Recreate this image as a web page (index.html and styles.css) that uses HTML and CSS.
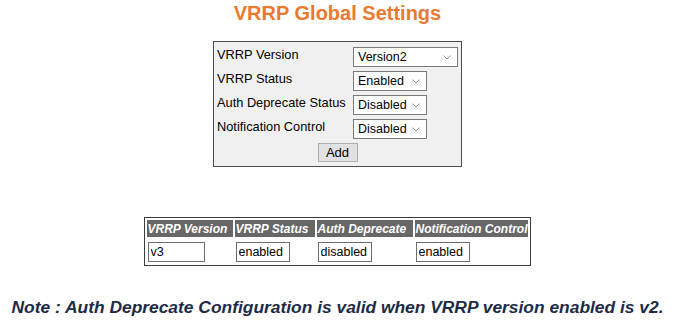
FILE: index.html
```html
<!DOCTYPE html>
<html>
<head>
    <title>VRRP Global Settings</title>
    <link rel="stylesheet" href="styles.css">
</head>
<body>
    <h1 class="page-title">VRRP Global Settings</h1>

    <form class="settings-box">
        <div class="settings-row">
            <label for="version">VRRP Version</label>
            <select id="version" class="wide">
                <option>Version2</option>
                <option>Version3</option>
            </select>
        </div>
        <div class="settings-row">
            <label for="status">VRRP Status</label>
            <select id="status">
                <option>Enabled</option>
                <option>Disabled</option>
            </select>
        </div>
        <div class="settings-row">
            <label for="auth">Auth Deprecate Status</label>
            <select id="auth">
                <option>Disabled</option>
                <option>Enabled</option>
            </select>
        </div>
        <div class="settings-row">
            <label for="notify">Notification Control</label>
            <select id="notify">
                <option>Disabled</option>
                <option>Enabled</option>
            </select>
        </div>
        <div class="button-row">
            <button type="button">Add</button>
        </div>
    </form>

    <table class="status-table">
        <tr>
            <th class="col-version">VRRP Version</th>
            <th class="col-status">VRRP Status</th>
            <th class="col-auth">Auth Deprecate</th>
            <th class="col-notify">Notification Control</th>
        </tr>
        <tr>
            <td><input type="text" class="first" value="v3" readonly></td>
            <td><input type="text" value="enabled" readonly></td>
            <td><input type="text" value="disabled" readonly></td>
            <td><input type="text" value="enabled" readonly></td>
        </tr>
    </table>

    <p class="note">Note : Auth Deprecate Configuration is valid when VRRP version enabled is v2.</p>
</body>
</html>
```

FILE: styles.css
```css
body {
    margin: 0;
    font-family: 'Liberation Sans', Arial, sans-serif;
    background: white;
    color: black;
}

.page-title {
    margin: 2px 0 0;
    font-size: 20px;
    line-height: 23px;
    font-weight: bold;
    text-align: center;
    color: #e8792f;
}

.settings-box {
    width: 241px;
    margin: 16px auto 0;
    padding: 3px 3px 4px;
    border: 1px solid #4a4a4a;
    background: #f0f0f0;
}

.settings-row {
    display: flex;
    align-items: flex-start;
    height: 24px;
}

.settings-row label {
    width: 136px;
    padding-top: 2px;
    font-size: 12.8px;
    line-height: 15px;
    white-space: nowrap;
}

select {
    -webkit-appearance: none;
    appearance: none;
    width: 74px;
    height: 20px;
    margin-top: 2px;
    padding: 0 0 0 4px;
    border: 1px solid #7a7a7a;
    border-radius: 0;
    background: white url("data:image/svg+xml;utf8,<svg xmlns='http://www.w3.org/2000/svg' width='8' height='5'><path d='M0.5 0.5 L4 4 L7.5 0.5' fill='none' stroke='%23909090' stroke-width='1'/></svg>") no-repeat right 6px center;
    font-family: 'Liberation Sans', Arial, sans-serif;
    font-size: 12.5px;
    color: black;
}

select.wide {
    width: 105px;
}

.button-row {
    display: flex;
    justify-content: center;
    margin-top: 2px;
}

button {
    width: 40px;
    height: 19px;
    padding: 0;
    border: 1px solid #adadad;
    background: #e1e1e1;
    font-family: 'Liberation Sans', Arial, sans-serif;
    font-size: 13px;
    color: black;
}

.status-table {
    margin: 50px auto 0;
    border: 1px solid #3c3c3c;
    border-spacing: 2px;
    table-layout: fixed;
}

.status-table th {
    height: 17px;
    padding: 0 1px;
    background: #676767;
    color: white;
    font-size: 12px;
    font-style: italic;
    font-weight: bold;
    text-align: left;
    white-space: nowrap;
    overflow: hidden;
}

.col-version { width: 84px; }
.col-status { width: 78px; }
.col-auth { width: 94px; }
.col-notify { width: 110px; }

.status-table td {
    padding: 3px 1px 1px;
}

.status-table input {
    box-sizing: border-box;
    width: 54px;
    height: 20px;
    padding: 0 2px;
    border: 1px solid #6e6e6e;
    font-family: 'Liberation Sans', Arial, sans-serif;
    font-size: 12.5px;
    color: black;
}

.status-table input.first {
    width: 57px;
}

.note {
    margin: 31px 0 0;
    font-size: 17.4px;
    line-height: 20px;
    font-style: italic;
    font-weight: bold;
    text-align: center;
    color: #1c2b47;
}
```
